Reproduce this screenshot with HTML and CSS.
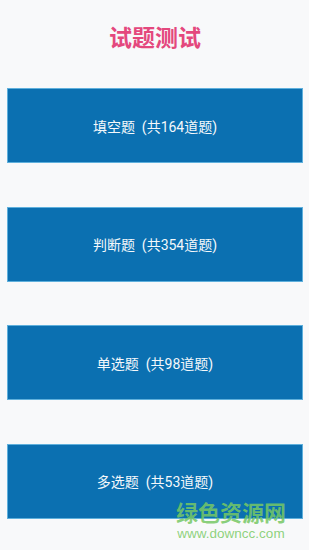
FILE: index.html
```html
<!DOCTYPE html>
<html lang="zh-CN">
<head>
    <meta charset="UTF-8">
    <meta name="viewport" content="width=device-width, initial-scale=1.0">
    <title>试题测试</title>
    <link rel="stylesheet" href="styles.css">
</head>
<body>
    <div class="page">
        <h1 class="title">试题测试</h1>
        <div class="list">
            <button class="item">填空题&nbsp;&nbsp;(共164道题)</button>
            <button class="item">判断题&nbsp;&nbsp;(共354道题)</button>
            <button class="item">单选题&nbsp;&nbsp;(共98道题)</button>
            <button class="item">多选题&nbsp;&nbsp;(共53道题)</button>
        </div>
    </div>
    <div class="watermark">
        <div class="wm-name">绿色资源网</div>
        <div class="wm-url">www.downcc.com</div>
    </div>
</body>
</html>
```

FILE: styles.css
```css
html, body {
    margin: 0;
    padding: 0;
}

body {
    width: 309px;
    height: 550px;
    background: #f8f9fa;
    font-family: "Roboto", "Noto Sans CJK SC", sans-serif;
    position: relative;
    overflow: hidden;
}

.page {
    padding: 0 7px 0 8px;
}

.title {
    margin: 0;
    padding-top: 25px;
    height: 64px;
    box-sizing: border-box;
    text-align: center;
    font-size: 23px;
    line-height: 28px;
    font-weight: bold;
    color: #e4487d;
}

.list {
    display: flex;
    flex-direction: column;
    gap: 45.5px;
    padding-top: 25px;
}

.item {
    height: 73px;
    border: none;
    background: #0b70b1;
    box-shadow: 0 0 0 1px #5fb0dc;
    color: #f4f8fb;
    font-family: "Roboto", "Noto Sans CJK SC", sans-serif;
    font-size: 14px;
    cursor: pointer;
}

.watermark {
    position: absolute;
    left: 170px;
    top: 499px;
    width: 122px;
    text-align: center;
    white-space: nowrap;
    pointer-events: none;
}

.wm-name {
    font-family: "Noto Sans CJK SC", sans-serif;
    font-size: 22px;
    line-height: 24px;
    font-weight: bold;
    color: rgba(118, 200, 100, 0.85);
}

.wm-url {
    margin-top: 3px;
    font-family: "Liberation Sans", sans-serif;
    font-size: 13.5px;
    line-height: 15px;
    color: rgba(130, 205, 110, 0.9);
}
```
